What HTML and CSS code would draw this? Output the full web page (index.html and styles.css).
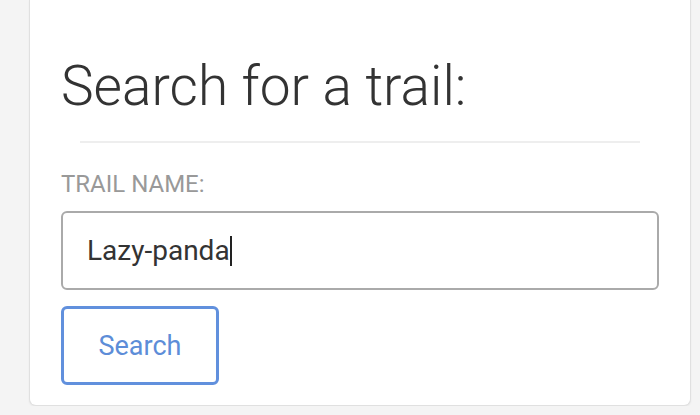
FILE: index.html
```html
<!DOCTYPE html>
<html lang="en">
<head>
    <meta charset="UTF-8">
    <meta name="viewport" content="width=device-width, initial-scale=1.0">
    <title>Search for a trail</title>
    <link rel="stylesheet" href="styles.css">
</head>
<body>

<div class="card">
    <h1>Search for a trail:</h1>
    <hr>

    <form id="trailForm">
        <label for="trailName">Trail name:</label>
        <div class="input-box">
            <span id="trailName" class="input-text">Lazy-panda</span><span class="caret"></span>
        </div>
        <button type="submit">Search</button>
    </form>
</div>

</body>
</html>
```

FILE: styles.css
```css
body {
    margin: 0;
    background-color: #f4f4f4;
    font-family: Roboto, "Noto Sans", sans-serif;
}
.card {
    margin-left: 29px;
    width: 598px;
    padding: 0 31px 20px 31px;
    background-color: #fff;
    border: 1px solid #e0e0e0;
    border-top: none;
    border-radius: 0 0 7px 7px;
    box-shadow: 0 1px 2px rgba(0, 0, 0, 0.06);
}
.card h1 {
    margin: 0;
    padding-top: 54px;
    font-size: 55px;
    font-weight: 300;
    line-height: 64px;
    color: #333;
}
.card hr {
    margin: 23px 19px 0 19px;
    border: none;
    border-top: 2px solid #eee;
}
.card label {
    display: block;
    margin-top: 27px;
    font-size: 24px;
    line-height: 28px;
    text-transform: uppercase;
    color: #999;
}
.input-box {
    display: flex;
    align-items: center;
    height: 75px;
    margin-top: 13px;
    padding: 0 24px;
    border: 2px solid #aaa;
    border-radius: 6px;
}
.input-text {
    font-size: 28px;
    color: #333;
}
.caret {
    display: inline-block;
    width: 2px;
    height: 30px;
    background-color: #222;
}
.card button {
    display: block;
    margin-top: 16px;
    width: 158px;
    height: 79px;
    background-color: #fff;
    border: 3px solid #6190dd;
    border-radius: 6px;
    font-family: Roboto, "Noto Sans", sans-serif;
    font-size: 27px;
    color: #5d8dd8;
    cursor: pointer;
}
```
